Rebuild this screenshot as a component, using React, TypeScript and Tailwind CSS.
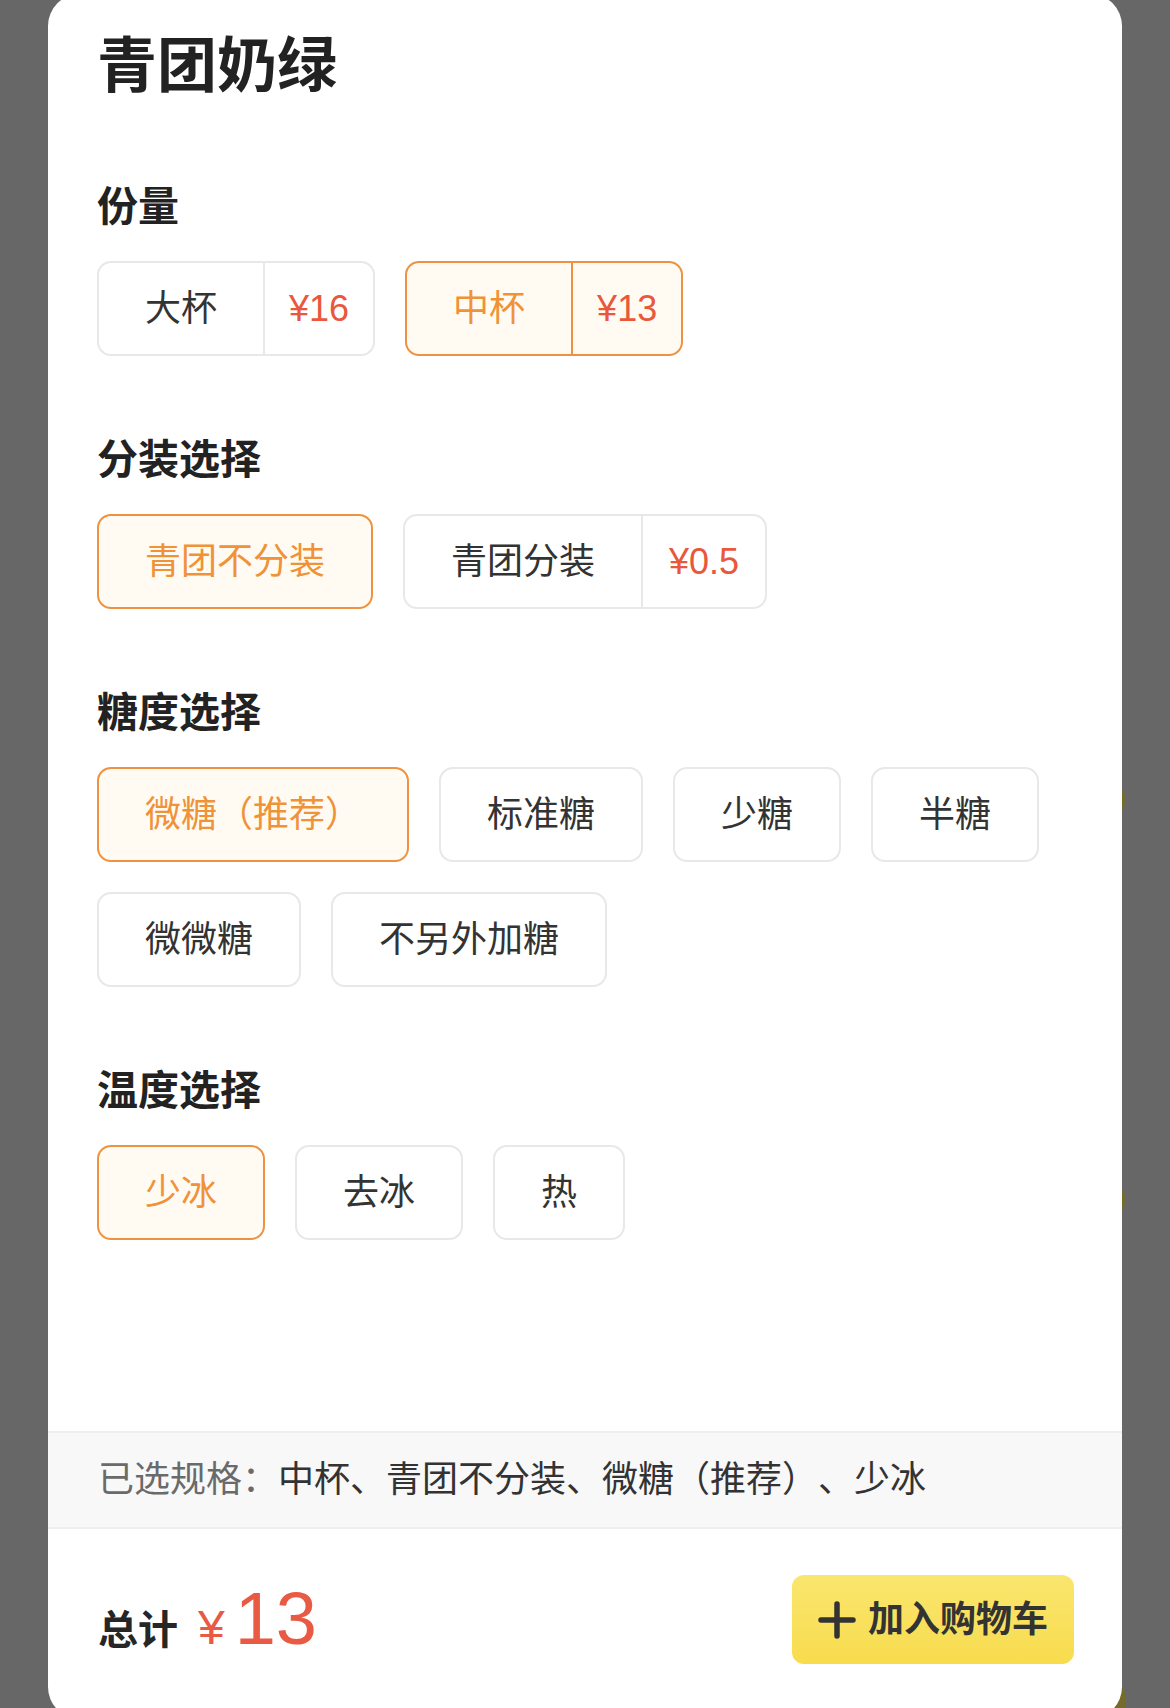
import React from "react";

type Opt = { label: string; price?: string; selected?: boolean; wide?: boolean };

const FONT = "[font-family:'Liberation_Sans','Noto_Sans_CJK_SC',sans-serif] [text-spacing-trim:space-all]";

function OptionBox({ o }: { o: Opt }) {
  const sel = o.selected;
  return (
    <div
      className={`flex h-[95px] items-stretch rounded-[14px] border-2 ${
        sel ? "border-[#ee9241] bg-[#fffbf2]" : "border-[#e8e8e8] bg-white"
      }`}
    >
      <div
        className={`flex items-center px-[46px] text-[36px] leading-none ${
          sel ? "text-[#ef9238]" : "text-[#333333]"
        }`}
      >
        {o.label}
      </div>
      {o.price && (
        <div
          className={`flex items-center border-l-2 text-[36px] leading-none text-[#e9573d] ${
            o.wide ? "px-[26px]" : "px-[24px]"
          } ${sel ? "border-[#ee9241]" : "border-[#e8e8e8]"}`}
        >
          {o.price}
        </div>
      )}
    </div>
  );
}

function Section({ title, opts, first }: { title: string; opts: Opt[]; first?: boolean }) {
  return (
    <div className={first ? "mt-[72px]" : "mt-[76px]"}>
      <div className="text-[41px] font-semibold leading-[56px] text-[#222222]">{title}</div>
      <div className="mt-[26px] flex flex-wrap gap-x-[30px] gap-y-[30px]">
        {opts.map((o) => (
          <OptionBox key={o.label} o={o} />
        ))}
      </div>
    </div>
  );
}

export default function App() {
  return (
    <div className={`relative h-[1708px] w-[1170px] overflow-hidden bg-[#676767] ${FONT}`}>
      {/* faint items behind the overlay */}
      <div className="absolute left-[1081px] top-[778px] h-[44px] w-[44px] rounded-full bg-[#776b2a]" />
      <div className="absolute left-[1081px] top-[1178px] h-[44px] w-[44px] rounded-full bg-[#776b2a]" />
      <div className="absolute left-[1060px] top-[1680px] h-[60px] w-[66px] rounded-[20px] bg-[#776b2a]" />

      <div className="relative mx-[48px] mt-[-6px] flex h-[1725px] flex-col rounded-[32px] bg-white">
        <div className="pl-[49px] pt-[33px]">
          <div className="text-[60px] font-bold leading-[80px] text-[#222222]">青团奶绿</div>

          <Section
            first
            title="份量"
            opts={[
              { label: "大杯", price: "¥16" },
              { label: "中杯", price: "¥13", selected: true },
            ]}
          />
          <Section
            title="分装选择"
            opts={[
              { label: "青团不分装", selected: true },
              { label: "青团分装", price: "¥0.5", wide: true },
            ]}
          />
          <Section
            title="糖度选择"
            opts={[
              { label: "微糖（推荐）", selected: true },
              { label: "标准糖" },
              { label: "少糖" },
              { label: "半糖" },
              { label: "微微糖" },
              { label: "不另外加糖" },
            ]}
          />
          <Section
            title="温度选择"
            opts={[{ label: "少冰", selected: true }, { label: "去冰" }, { label: "热" }]}
          />
        </div>

        <div className="flex-1" />

        <div className="flex h-[98px] items-center border-y-2 border-[#efefef] bg-[#f8f8f8] pl-[50px] text-[36px]">
          <span className="text-[#6a6a6a]">已选规格：</span>
          <span className="text-[#333333]">中杯、青团不分装、微糖（推荐）、少冰</span>
        </div>

        <div className="flex h-[190px] items-start justify-between pl-[50px] pr-[48px] pt-[46px]">
          <div className="flex h-[89px] items-center">
            <div className="flex items-baseline pt-[6px]">
              <span className="text-[40px] font-semibold text-[#262626]">总计</span>
              <span className="ml-[20px] text-[48px] text-[#e95a45]">¥</span>
              <span className="ml-[10px] text-[74px] leading-none text-[#e95a45]">13</span>
            </div>
          </div>
          <button className="flex h-[89px] w-[282px] items-center justify-center gap-[12px] rounded-[12px] bg-gradient-to-b from-[#fae66e] to-[#f8dc4d]">
            <svg width="38" height="38" viewBox="0 0 38 38">
              <path d="M19 3v32M3 19h32" stroke="#333333" strokeWidth="5.5" strokeLinecap="round" />
            </svg>
            <span className="text-[36px] font-bold text-[#333333]">加入购物车</span>
          </button>
        </div>
      </div>
    </div>
  );
}
